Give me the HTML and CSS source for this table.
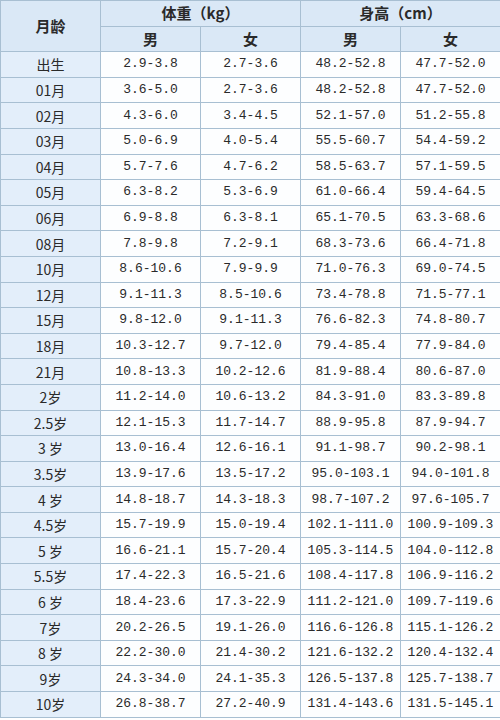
FILE: index.html
```html
<!DOCTYPE html>
<html lang="zh">
<head>
<meta charset="utf-8">
<link rel="stylesheet" href="styles.css">
</head>
<body>
<table class="growth">
  <colgroup><col class="c1"><col class="c"><col class="c"><col class="c"><col class="c"></colgroup>
  <thead>
    <tr><th rowspan="2" class="age-h">月龄</th><th colspan="2">体重（kg）</th><th colspan="2">身高（cm）</th></tr>
    <tr><th>男</th><th>女</th><th>男</th><th>女</th></tr>
  </thead>
  <tbody>
    <tr><td class="age">出生</td><td>2.9-3.8</td><td>2.7-3.6</td><td>48.2-52.8</td><td>47.7-52.0</td></tr>
    <tr><td class="age">01月</td><td>3.6-5.0</td><td>2.7-3.6</td><td>48.2-52.8</td><td>47.7-52.0</td></tr>
    <tr><td class="age">02月</td><td>4.3-6.0</td><td>3.4-4.5</td><td>52.1-57.0</td><td>51.2-55.8</td></tr>
    <tr><td class="age">03月</td><td>5.0-6.9</td><td>4.0-5.4</td><td>55.5-60.7</td><td>54.4-59.2</td></tr>
    <tr><td class="age">04月</td><td>5.7-7.6</td><td>4.7-6.2</td><td>58.5-63.7</td><td>57.1-59.5</td></tr>
    <tr><td class="age">05月</td><td>6.3-8.2</td><td>5.3-6.9</td><td>61.0-66.4</td><td>59.4-64.5</td></tr>
    <tr><td class="age">06月</td><td>6.9-8.8</td><td>6.3-8.1</td><td>65.1-70.5</td><td>63.3-68.6</td></tr>
    <tr><td class="age">08月</td><td>7.8-9.8</td><td>7.2-9.1</td><td>68.3-73.6</td><td>66.4-71.8</td></tr>
    <tr><td class="age">10月</td><td>8.6-10.6</td><td>7.9-9.9</td><td>71.0-76.3</td><td>69.0-74.5</td></tr>
    <tr><td class="age">12月</td><td>9.1-11.3</td><td>8.5-10.6</td><td>73.4-78.8</td><td>71.5-77.1</td></tr>
    <tr><td class="age">15月</td><td>9.8-12.0</td><td>9.1-11.3</td><td>76.6-82.3</td><td>74.8-80.7</td></tr>
    <tr><td class="age">18月</td><td>10.3-12.7</td><td>9.7-12.0</td><td>79.4-85.4</td><td>77.9-84.0</td></tr>
    <tr><td class="age">21月</td><td>10.8-13.3</td><td>10.2-12.6</td><td>81.9-88.4</td><td>80.6-87.0</td></tr>
    <tr><td class="age">2岁</td><td>11.2-14.0</td><td>10.6-13.2</td><td>84.3-91.0</td><td>83.3-89.8</td></tr>
    <tr><td class="age">2.5岁</td><td>12.1-15.3</td><td>11.7-14.7</td><td>88.9-95.8</td><td>87.9-94.7</td></tr>
    <tr><td class="age">3 岁</td><td>13.0-16.4</td><td>12.6-16.1</td><td>91.1-98.7</td><td>90.2-98.1</td></tr>
    <tr><td class="age">3.5岁</td><td>13.9-17.6</td><td>13.5-17.2</td><td>95.0-103.1</td><td>94.0-101.8</td></tr>
    <tr><td class="age">4 岁</td><td>14.8-18.7</td><td>14.3-18.3</td><td>98.7-107.2</td><td>97.6-105.7</td></tr>
    <tr><td class="age">4.5岁</td><td>15.7-19.9</td><td>15.0-19.4</td><td>102.1-111.0</td><td>100.9-109.3</td></tr>
    <tr><td class="age">5 岁</td><td>16.6-21.1</td><td>15.7-20.4</td><td>105.3-114.5</td><td>104.0-112.8</td></tr>
    <tr><td class="age">5.5岁</td><td>17.4-22.3</td><td>16.5-21.6</td><td>108.4-117.8</td><td>106.9-116.2</td></tr>
    <tr><td class="age">6 岁</td><td>18.4-23.6</td><td>17.3-22.9</td><td>111.2-121.0</td><td>109.7-119.6</td></tr>
    <tr><td class="age">7岁</td><td>20.2-26.5</td><td>19.1-26.0</td><td>116.6-126.8</td><td>115.1-126.2</td></tr>
    <tr><td class="age">8 岁</td><td>22.2-30.0</td><td>21.4-30.2</td><td>121.6-132.2</td><td>120.4-132.4</td></tr>
    <tr><td class="age">9岁</td><td>24.3-34.0</td><td>24.1-35.3</td><td>126.5-137.8</td><td>125.7-138.7</td></tr>
    <tr><td class="age">10岁</td><td>26.8-38.7</td><td>27.2-40.9</td><td>131.4-143.6</td><td>131.5-145.1</td></tr>
  </tbody>
</table>
</body>
</html>
```
FILE: styles.css
```css
html, body {
  margin: 0;
  padding: 0;
  background: #ffffff;
}
.growth {
  width: 500px;
  border-collapse: collapse;
  table-layout: fixed;
  color: #2a2a2a;
}
.growth .c1 { width: 100px; }
.growth .c { width: 100px; }
.growth th,
.growth td {
  border: 1px solid #a8bfd2;
  text-align: center;
  padding: 0;
  height: 24.6px;
  line-height: 16px;
}
.growth th {
  background: #dae8f6;
  font-family: "Noto Sans CJK SC", sans-serif;
  font-size: 15px;
  font-weight: bold;
}
.growth td {
  background: #fdfeff;
  font-family: "Liberation Mono", "Noto Sans CJK SC", monospace;
  font-size: 13px;
}
.growth td.age {
  background: #e3eefa;
  font-family: "Noto Sans CJK SC", sans-serif;
  font-size: 14px;
}
```
